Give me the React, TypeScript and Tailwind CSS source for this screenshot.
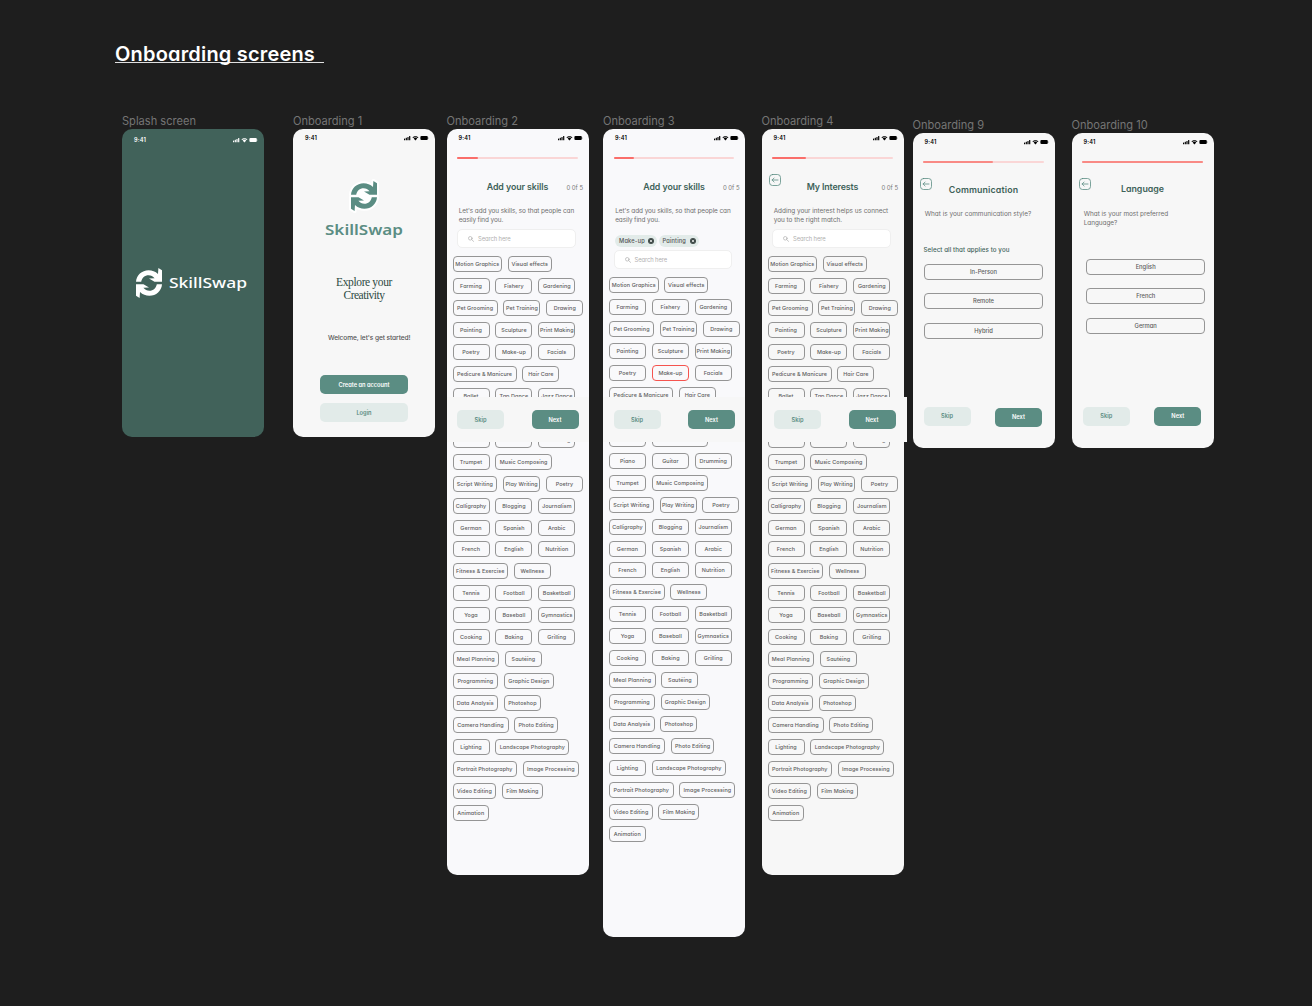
import React, { useLayoutEffect, useRef, useState } from "react";

const UI = "font-['Inter','Open_Sans',sans-serif] [font-feature-settings:'cv11']";

/* Single line of text spread (or stretched) to an exact width. */
function Fit({
  w,
  stretch = false,
  className = "",
  children,
}: {
  w: number;
  stretch?: boolean;
  className?: string;
  children: string;
}) {
  const ref = useRef<HTMLSpanElement>(null);
  const [natural, setNatural] = useState(0);
  useLayoutEffect(() => {
    if (ref.current) setNatural(ref.current.getBoundingClientRect().width);
  }, []);
  const style: React.CSSProperties = {};
  if (natural) {
    if (stretch) {
      style.transform = `scaleX(${w / natural})`;
      style.marginRight = w - natural;
    } else {
      style.letterSpacing = `${(w - natural) / children.length}px`;
    }
  }
  return (
    <span ref={ref} style={style} className={`inline-block origin-left whitespace-pre ${className}`}>
      {children}
    </span>
  );
}

function StatusBar({ className = "text-black" }: { className?: string }) {
  return (
    <div className={`flex h-[19px] shrink-0 items-center justify-between pr-[6px] pl-[12px] ${className}`}>
      <Fit w={12} className="text-[5.6px] font-semibold">9:41</Fit>
      <svg width="25" height="6" viewBox="0 0 25 6" fill="currentColor" className="-mt-[1px]">
        <rect x="0" y="3.6" width="1.1" height="1.7" rx="0.3" />
        <rect x="1.7" y="2.8" width="1.2" height="2.5" rx="0.3" />
        <rect x="3.4" y="1.9" width="1.2" height="3.4" rx="0.3" />
        <rect x="5.1" y="0.9" width="1.2" height="4.4" rx="0.3" />
        <path d="M8.4 2.4C10 .7 12.9.7 14.5 2.4L13.8 3.1C12.5 1.8 10.4 1.8 9.1 3.1ZM9.6 3.5C10.6 2.5 12.3 2.5 13.3 3.5L11.45 5.4Z" />
        <rect x="16.4" y="1" width="7.4" height="4.1" rx="1.1" />
        <rect x="24.1" y="2.4" width="0.5" height="1.3" rx="0.2" opacity="0.5" />
      </svg>
    </div>
  );
}

const ARROW =
  "M0 13.8C.4 7.2 5.8 2.2 12.6 2.2C16.2 2.2 19.3 3.4 22 6L22.4 0L26 2.3V13.8H18.5L13 10.6L18.6 10.3C17 8.3 15 7.3 12.6 7.3C8.8 7.3 5.8 10 5.2 13.8Z";

function SwapMark({ halo = false }: { halo?: boolean }) {
  return (
    <svg width="26" height="30" viewBox="0 0 26 30" className="shrink-0 overflow-visible" fill="currentColor">
      {halo && (
        <g fill="white" stroke="white" strokeWidth="4" strokeLinejoin="round">
          <path d={ARROW} />
          <path d={ARROW} transform="rotate(180 13 15)" />
          <circle cx="13" cy="15" r="9" />
        </g>
      )}
      <path d={ARROW} />
      <path d={ARROW} transform="rotate(180 13 15)" />
    </svg>
  );
}

function Screen({
  label,
  className,
  frame,
  children,
}: {
  label: string;
  className: string;
  frame: string;
  children: React.ReactNode;
}) {
  return (
    <section className={`w-[142px] shrink-0 ${className}`}>
      <h2 className="h-[15px] text-[11.1px] leading-[15px] font-normal whitespace-nowrap text-[#757575] [font-feature-settings:normal]">
        {label}
      </h2>
      <div className={`relative flex flex-col rounded-[10px] ${frame}`}>{children}</div>
    </section>
  );
}

function Progress({ fill, tone = "bg-[#fa6e6a]" }: { fill: string; tone?: string }) {
  return (
    <div className="mt-[9px] ml-[10.5px] h-[2px] w-[120.5px] shrink-0 rounded-full bg-[#fad6d6]">
      <div className={`h-full rounded-full ${tone} ${fill}`} />
    </div>
  );
}

function Back() {
  return (
    <svg width="12" height="12" viewBox="0 0 12 12" fill="none" stroke="#5b8d83" strokeWidth="0.8" strokeLinecap="round" strokeLinejoin="round">
      <rect x="0.5" y="0.5" width="11" height="11" rx="3" />
      <path d="M9 6H3.1M5.1 4L3.1 6L5.1 8" />
    </svg>
  );
}

function TitleRow({
  title,
  w,
  back = false,
  counter = false,
  lift = "",
}: {
  title: string;
  w: number;
  back?: boolean;
  counter?: boolean;
  lift?: string;
}) {
  return (
    <div className="grid h-[47px] shrink-0 grid-cols-[22px_1fr_22px] items-center pt-[9px]">
      <div className="-mt-[14px] pl-[7.5px]">{back && <Back />}</div>
      <div className={`flex justify-center leading-[12px] ${lift}`}>
        <Fit w={w} className="text-[8.8px] font-semibold text-[#3e6259]">{title}</Fit>
      </div>
      <div className="flex pt-[1px] leading-[9px]">{counter && <Fit w={16.5} className="text-[6px] text-[#777777]">0 0f 5</Fit>}</div>
    </div>
  );
}

function Paragraph({ lines, className = "pt-[1px]" }: { lines: [string, number][]; className?: string }) {
  return (
    <div className={`flex h-[23px] shrink-0 flex-col pl-[12.2px] text-[6.4px] leading-[9px] text-[#6f6f6f] ${className}`}>
      {lines.map(([t, w]) => (
        <div key={t} className="h-[9px]">
          <Fit w={w}>{t}</Fit>
        </div>
      ))}
    </div>
  );
}

function Search() {
  return (
    <div className="ml-[10.5px] flex h-[19px] w-[118.5px] shrink-0 items-center rounded-[5px] border border-[#efefef] bg-white pl-[10px]">
      <svg width="6" height="6" viewBox="0 0 6 6" fill="none" stroke="#a3a3a3" strokeWidth="0.6" strokeLinecap="round">
        <circle cx="2.3" cy="2.3" r="1.8" />
        <path d="M3.7 3.7L5.6 5.4" />
      </svg>
      <div className="ml-[4px] flex leading-[8px]">
        <Fit w={32.5} className="text-[5.8px] text-[#b0b0b0]">Search here</Fit>
      </div>
    </div>
  );
}

const S = "w-[37px]";
type Row = [string, string][];

const FIRST_ROWS: Row[] = [
  [["Motion Graphics", "w-[49.5px]"], ["Visual effects", "w-[43.7px]"]],
  [["Farming", S], ["Fishery", S], ["Gardening", S]],
  [["Pet Grooming", "w-[45px]"], ["Pet Training", S], ["Drawing", S]],
  [["Painting", S], ["Sculpture", S], ["Print Making", S]],
  [["Poetry", S], ["Make-up", S], ["Facials", S]],
  [["Pedicure & Manicure", "w-[64px]"], ["Hair Care", S]],
];
const DANCE_ROW: Row = [["Ballet", S], ["Tap Dance", S], ["Jazz Dance", S]];
const BLANK_ROW: Row = [["", S], ["", S], ["", S]];
const LAST_ROWS: Row[] = [
  [["", S], ["", "w-[56.5px]"]],
  [["Piano", S], ["Guitar", S], ["Drumming", S]],
  [["Trumpet", S], ["Music Composing", "w-[56.5px]"]],
  [["Script Writing", "w-[44.7px]"], ["Play Writing", S], ["Poetry", S]],
  [["Calligraphy", S], ["Blogging", S], ["Journalism", S]],
  [["German", S], ["Spanish", S], ["Arabic", S]],
  [["French", S], ["English", S], ["Nutrition", S]],
  [["Fitness & Exercise", "w-[55.5px]"], ["Wellness", S]],
  [["Tennis", S], ["Football", S], ["Basketball", S]],
  [["Yoga", S], ["Baseball", S], ["Gymnastics", S]],
  [["Cooking", S], ["Baking", S], ["Grilling", S]],
  [["Meal Planning", "w-[46.5px]"], ["Sautéing", S]],
  [["Programming", "w-[45.7px]"], ["Graphic Design", "w-[49.5px]"]],
  [["Data Analysis", "w-[45.5px]"], ["Photoshop", S]],
  [["Camera Handling", "w-[56px]"], ["Photo Editing", "w-[43.6px]"]],
  [["Lighting", S], ["Landscape Photography", "w-[74px]"]],
  [["Portrait Photography", "w-[64.5px]"], ["Image Processing", "w-[56px]"]],
  [["Video Editing", "w-[43.6px]"], ["Film Making", "w-[40.8px]"]],
  [["Animation", "w-[36.5px]"]],
];

function Chips({ selected, coveredRow = false }: { selected?: string; coveredRow?: boolean }) {
  const rows = [...FIRST_ROWS, coveredRow ? BLANK_ROW : DANCE_ROW, ...LAST_ROWS];
  return (
    <div className="mt-[8.3px] flex flex-col gap-[5.95px] pl-[6px]">
      {rows.map((row, i) => (
        <div key={i} className="flex gap-[5.9px]">
          {row.map(([text, w], j) => (
            <div
              key={j}
              className={`flex h-[16px] shrink-0 items-center justify-center rounded-[4px] border text-[5.45px] leading-[8px] font-medium tracking-[0.06px] whitespace-nowrap text-[#5c5c5c] ${w} ${
                selected && text === selected ? "border-[#f5544f]" : "border-[#959595]"
              }`}
            >
              {text}
            </div>
          ))}
        </div>
      ))}
    </div>
  );
}

function Button({ children, primary = false, className = "w-[47px]" }: { children: string; primary?: boolean; className?: string }) {
  return (
    <button
      className={`flex h-[19px] shrink-0 items-center justify-center rounded-[5px] text-[5.7px] leading-[8px] font-semibold ${
        primary ? "bg-[#5b8d83] text-white" : "bg-[#e2ebe9] text-[#5b8d83]"
      } ${className}`}
    >
      {children}
    </button>
  );
}

function ActionBar({ className }: { className: string }) {
  return (
    <div className={`absolute top-[268px] flex h-[45px] items-center gap-[27.5px] bg-[#f7f7f7] ${className}`}>
      <Button>Skip</Button>
      <Button primary>Next</Button>
    </div>
  );
}

function Tag({ text, w, className }: { text: string; w: number; className: string }) {
  return (
    <div className={`flex h-[12px] items-center justify-between rounded-full bg-[#e2ebe9] pr-[3px] pl-[4px] leading-[8px] ${className}`}>
      <Fit w={w} className="text-[5.7px] font-medium text-[#555555]">{text}</Fit>
      <svg width="6" height="6" viewBox="0 0 6 6">
        <circle cx="3" cy="3" r="3" fill="#3f4a48" />
        <path d="M1.9 1.9L4.1 4.1M4.1 1.9L1.9 4.1" stroke="white" strokeWidth="0.7" />
      </svg>
    </div>
  );
}

function Options({ items, className }: { items: string[]; className: string }) {
  return (
    <div className={`flex flex-col gap-[13.5px] ${className}`}>
      {items.map((t) => (
        <div key={t} className="flex h-[16px] w-[119px] items-center justify-center rounded-[4px] border border-[#959595] text-[5.8px] leading-[8px] font-medium text-[#5c5c5c]">
          {t}
        </div>
      ))}
    </div>
  );
}

const SKILLS: [string, number][] = [["Let's add you skills, so that people can", 115.5], ["easily find you.", 44.5]];

export default function App() {
  return (
    <main className={`h-[1006px] w-[1312px] overflow-hidden bg-[#1e1e1e] ${UI}`}>
      <div className="pt-[42px] pl-[115px]">
        <h1 className="h-[21px] w-[209px] border-b border-[#e0e0e0] leading-[24px] text-white">
          <Fit w={200} className="text-[20px] font-semibold">Onboarding screens</Fit>
        </h1>
      </div>
      <div className="flex items-start pt-[51px] pl-[122px]">
        <Screen label="Splash screen" className="" frame="h-[308px] bg-[#41625a]">
          <div className="pt-[2px]">
            <StatusBar className="text-white" />
          </div>
          <div className="mt-[118px] flex items-center pl-[14px] text-white">
            <SwapMark />
            <div className="-mt-[2px] ml-[6.5px] flex leading-[20px]">
              <Fit w={78} stretch className="font-['Noto_Sans',sans-serif] text-[15px] font-medium">SkillSwap</Fit>
            </div>
          </div>
        </Screen>

        <Screen label="Onboarding 1" className="ml-[29px]" frame="h-[308px] bg-[#f7f7f7]">
          <StatusBar />
          <div className="mt-[33px] ml-[58px] text-[#5b8d83]">
            <SwapMark halo />
          </div>
          <div className="mt-[8px] flex pl-[32px] leading-[20px] text-[#5b8d83]">
            <Fit w={78} stretch className="font-['Noto_Sans',sans-serif] text-[15px] font-semibold">SkillSwap</Fit>
          </div>
          <div className="mt-[37px] flex flex-col items-center font-['Liberation_Serif',serif] text-[11.5px] leading-[12.6px] text-[#2e4a43]">
            <Fit w={56}>Explore your</Fit>
            <Fit w={41}>Creativity</Fit>
          </div>
          <div className="mt-[32px] flex pl-[35px] leading-[10px]">
            <Fit w={82.5} className="text-[6.6px] font-medium text-[#555555]">Welcome, let's get started!</Fit>
          </div>
          <div className="mt-[32px] ml-[27px] flex flex-col gap-[9px]">
            <Button primary className="w-[88px]">Create an account</Button>
            <Button className="w-[88px]">Login</Button>
          </div>
        </Screen>

        <Screen label="Onboarding 2" className="ml-[11.5px]" frame="h-[746px] bg-[#f9f9fb]">
          <StatusBar />
          <Progress fill="w-[20.5px]" />
          <TitleRow title="Add your skills" w={61.5} counter />
          <Paragraph lines={SKILLS} />
          <Search />
          <Chips />
          <ActionBar className="left-0 w-[142px] pl-[10.5px]" />
        </Screen>

        <Screen label="Onboarding 3" className="ml-[14.5px]" frame="h-[808px] bg-[#f9f9fb]">
          <StatusBar />
          <Progress fill="w-[20.5px]" />
          <TitleRow title="Add your skills" w={61.5} counter />
          <Paragraph lines={SKILLS} />
          <div className="mt-[6px] mb-[3px] flex gap-[1.5px] pl-[12px]">
            <Tag text="Make-up" w={26} className="w-[42px]" />
            <Tag text="Painting" w={23.5} className="w-[40.5px]" />
          </div>
          <Search />
          <Chips selected="Make-up" coveredRow />
          <ActionBar className="left-0 w-[142px] pl-[10.5px]" />
        </Screen>

        <Screen label="Onboarding 4" className="ml-[16.5px]" frame="h-[746px] bg-[#f7f7f7]">
          <StatusBar />
          <Progress fill="w-[33.5px]" />
          <TitleRow title="My Interests" w={51.5} back counter />
          <Paragraph lines={[["Adding your interest helps us connect", 114.5], ["you to the right match.", 68.5]]} />
          <Search />
          <Chips />
          <ActionBar className="left-[5.5px] w-[139.5px] pl-[7px]" />
        </Screen>

        <Screen label="Onboarding 9" className="mt-[3.5px] ml-[9px]" frame="h-[315px] bg-[#f7f7f7]">
          <StatusBar />
          <Progress fill="w-[69.5px]" tone="bg-[#f98a85]" />
          <TitleRow title="Communication" w={69.5} back lift="-mt-[2px]" />
          <Paragraph className="pt-[0.5px]" lines={[["What is your communication style?", 106.5]]} />
          <div className="mt-[12px] flex pl-[11px] leading-[9px]">
            <Fit w={86} className="text-[6.2px] font-medium text-[#3e6259]">Select all that applies to you</Fit>
          </div>
          <Options items={["In-Person", "Remote", "Hybrid"]} className="mt-[10px] pl-[11.5px]" />
          <div className="mt-[68px] flex gap-[24.5px] pl-[11px]">
            <Button>Skip</Button>
            <div className="mt-[1px]">
              <Button primary>Next</Button>
            </div>
          </div>
        </Screen>

        <Screen label="Onboarding 10" className="mt-[3.5px] ml-[17px]" frame="h-[315px] bg-[#f7f7f7]">
          <StatusBar />
          <Progress fill="w-full" tone="bg-[#f98a85]" />
          <TitleRow title="Language" w={43} back lift="-mt-[4px]" />
          <Paragraph className="pt-0" lines={[["What is your most preferred", 84.5], ["Language?", 33.5]]} />
          <Options items={["English", "French", "German"]} className="mt-[26px] pl-[14.7px]" />
          <div className="mt-[73px] flex gap-[24.5px] pl-[11.3px]">
            <Button>Skip</Button>
            <Button primary>Next</Button>
          </div>
        </Screen>
      </div>
    </main>
  );
}
